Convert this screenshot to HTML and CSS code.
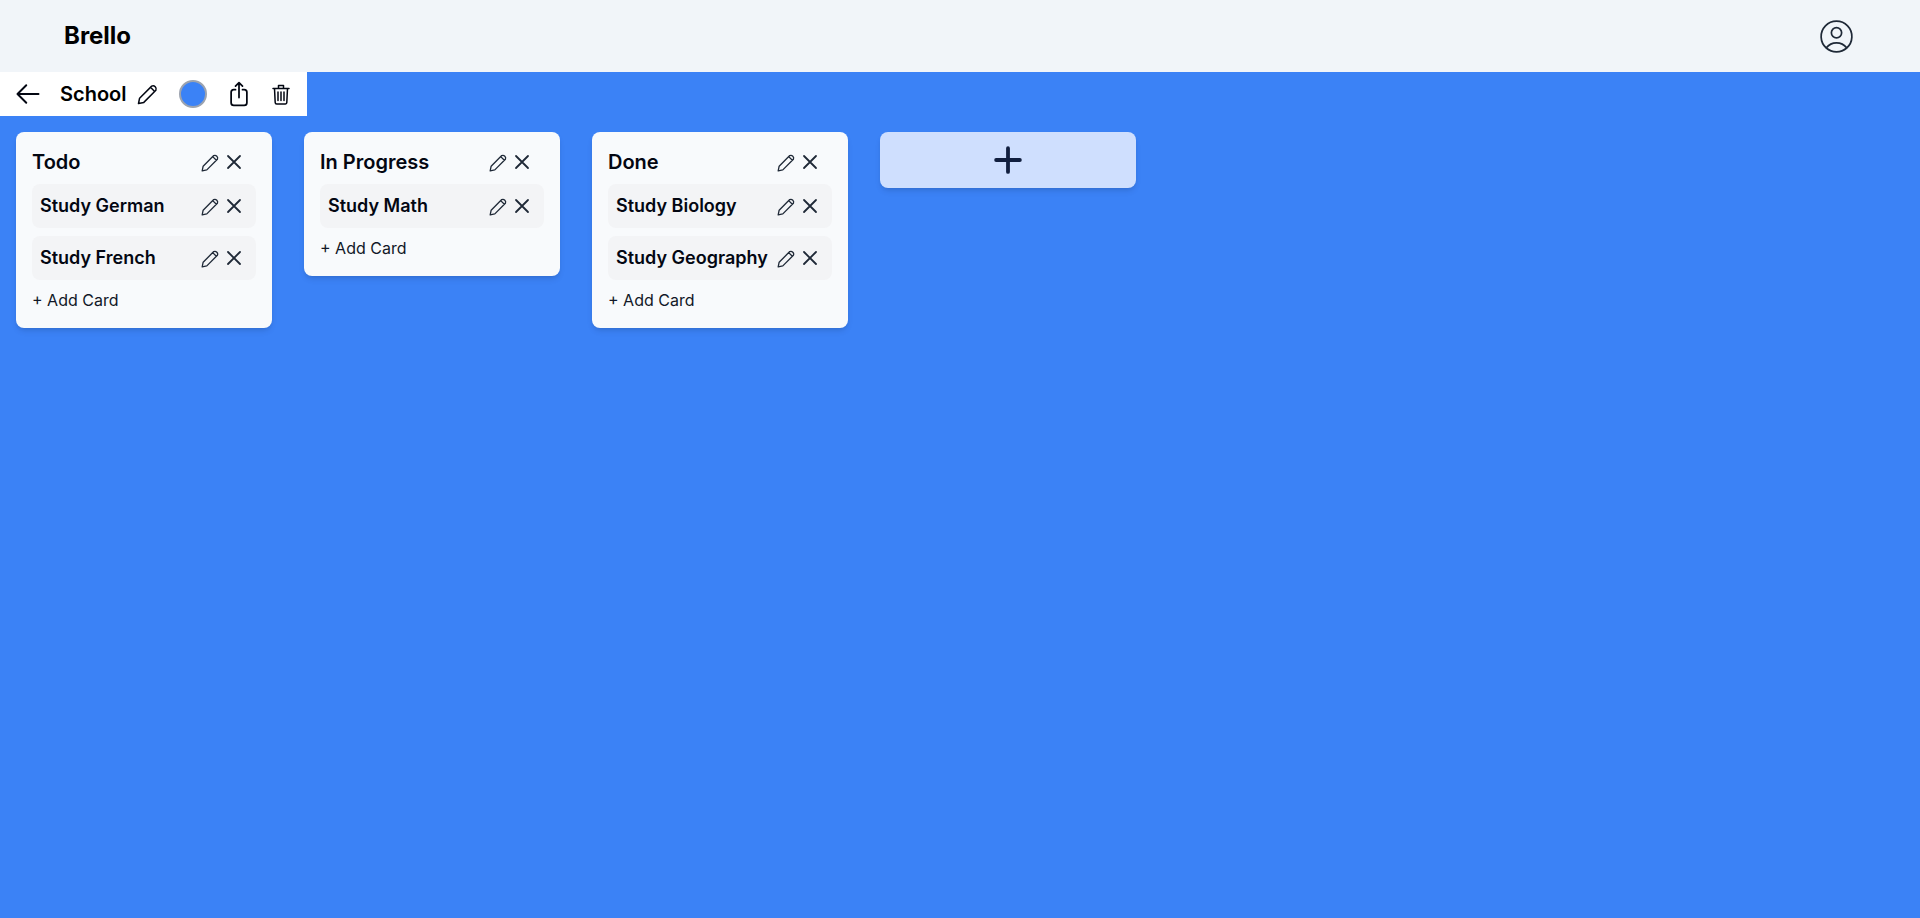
FILE: index.html
```html
<!doctype html>
<html>
  <head>
    <meta charset="utf-8" />
    <title>Brello</title>
    <link rel="stylesheet" href="styles.css">
  </head>
  <body>
    <div class="navbar">
      <div class="brand">Brello</div>
      <svg class="user-icon" viewBox="0 0 24 24"><path d="M17.982 18.725A7.488 7.488 0 0 0 12 15.75a7.488 7.488 0 0 0-5.982 2.975m11.964 0a9 9 0 1 0-11.963 0m11.963 0A8.966 8.966 0 0 1 12 21a8.966 8.966 0 0 1-5.982-2.275M15 9.75a3 3 0 1 1-6 0 3 3 0 0 1 6 0Z"/></svg>
    </div>

    <div class="toolbar">
      <svg class="back-icon" viewBox="0 0 24 24"><path d="M10.5 19.5 3 12m0 0 7.5-7.5M3 12h18"/></svg>
      <span class="board-name">School</span>
      <svg class="tool-pencil" viewBox="0 0 24 24"><path d="M3.6 16.2 15.7 4.1a3.2 3.2 0 0 1 4.2 4.2L7.8 20.4 2.5 21.5ZM14.5 5.3l4.2 4.2"/></svg>
      <span class="color-dot"></span>
      <svg class="tool-share" viewBox="0 0 24 24"><path d="M9 8.25H7.5a2.25 2.25 0 0 0-2.25 2.25v9a2.25 2.25 0 0 0 2.25 2.25h9a2.25 2.25 0 0 0 2.25-2.25v-9a2.25 2.25 0 0 0-2.25-2.25H15m0-3-3-3m0 0-3 3m3-3V15"/></svg>
      <svg class="tool-trash" viewBox="0 0 20 24"><path d="M2 6.5h16M7.5 6V3.5h5V6M3.5 6.5l.7 14a1.5 1.5 0 0 0 1.5 1.5h8.6a1.5 1.5 0 0 0 1.5-1.5l.7-14M7 10v8.5M10 10v8.5M13 10v8.5"/></svg>
    </div>

    <div class="board">
      <div class="column">
        <div class="column-header">
          <span class="column-title">Todo</span>
          <svg class="pencil" viewBox="0 0 24 24"><path d="M3.6 16.2 15.7 4.1a3.2 3.2 0 0 1 4.2 4.2L7.8 20.4 2.5 21.5ZM14.5 5.3l4.2 4.2"/></svg>
          <svg class="close" viewBox="0 0 24 24"><path d="M6 18 18 6M6 6l12 12"/></svg>
        </div>
        <div class="card">
          <span class="card-title">Study German</span>
          <svg class="pencil" viewBox="0 0 24 24"><path d="M3.6 16.2 15.7 4.1a3.2 3.2 0 0 1 4.2 4.2L7.8 20.4 2.5 21.5ZM14.5 5.3l4.2 4.2"/></svg>
          <svg class="close" viewBox="0 0 24 24"><path d="M6 18 18 6M6 6l12 12"/></svg>
        </div>
        <div class="card">
          <span class="card-title">Study French</span>
          <svg class="pencil" viewBox="0 0 24 24"><path d="M3.6 16.2 15.7 4.1a3.2 3.2 0 0 1 4.2 4.2L7.8 20.4 2.5 21.5ZM14.5 5.3l4.2 4.2"/></svg>
          <svg class="close" viewBox="0 0 24 24"><path d="M6 18 18 6M6 6l12 12"/></svg>
        </div>
        <div class="add-card">+ Add Card</div>
      </div>

      <div class="column">
        <div class="column-header">
          <span class="column-title">In Progress</span>
          <svg class="pencil" viewBox="0 0 24 24"><path d="M3.6 16.2 15.7 4.1a3.2 3.2 0 0 1 4.2 4.2L7.8 20.4 2.5 21.5ZM14.5 5.3l4.2 4.2"/></svg>
          <svg class="close" viewBox="0 0 24 24"><path d="M6 18 18 6M6 6l12 12"/></svg>
        </div>
        <div class="card">
          <span class="card-title">Study Math</span>
          <svg class="pencil" viewBox="0 0 24 24"><path d="M3.6 16.2 15.7 4.1a3.2 3.2 0 0 1 4.2 4.2L7.8 20.4 2.5 21.5ZM14.5 5.3l4.2 4.2"/></svg>
          <svg class="close" viewBox="0 0 24 24"><path d="M6 18 18 6M6 6l12 12"/></svg>
        </div>
        <div class="add-card">+ Add Card</div>
      </div>

      <div class="column">
        <div class="column-header">
          <span class="column-title">Done</span>
          <svg class="pencil" viewBox="0 0 24 24"><path d="M3.6 16.2 15.7 4.1a3.2 3.2 0 0 1 4.2 4.2L7.8 20.4 2.5 21.5ZM14.5 5.3l4.2 4.2"/></svg>
          <svg class="close" viewBox="0 0 24 24"><path d="M6 18 18 6M6 6l12 12"/></svg>
        </div>
        <div class="card">
          <span class="card-title">Study Biology</span>
          <svg class="pencil" viewBox="0 0 24 24"><path d="M3.6 16.2 15.7 4.1a3.2 3.2 0 0 1 4.2 4.2L7.8 20.4 2.5 21.5ZM14.5 5.3l4.2 4.2"/></svg>
          <svg class="close" viewBox="0 0 24 24"><path d="M6 18 18 6M6 6l12 12"/></svg>
        </div>
        <div class="card">
          <span class="card-title">Study Geography</span>
          <svg class="pencil" viewBox="0 0 24 24"><path d="M3.6 16.2 15.7 4.1a3.2 3.2 0 0 1 4.2 4.2L7.8 20.4 2.5 21.5ZM14.5 5.3l4.2 4.2"/></svg>
          <svg class="close" viewBox="0 0 24 24"><path d="M6 18 18 6M6 6l12 12"/></svg>
        </div>
        <div class="add-card">+ Add Card</div>
      </div>

      <div class="add-column">
        <svg class="plus" viewBox="0 0 24 24"><path d="M12 4.5v15m7.5-7.5h-15"/></svg>
      </div>
    </div>
  </body>
</html>
```

FILE: styles.css
```css
html,
body {
  height: 100%;
}
body {
  margin: 0;
  display: flex;
  flex-direction: column;
  align-items: flex-start;
  background: #3b82f6;
  font-family: Inter, "Liberation Sans", sans-serif;
  color: #030712;
}
svg {
  display: block;
  flex: none;
  fill: none;
  stroke: currentColor;
  stroke-width: 1.5;
  stroke-linecap: round;
  stroke-linejoin: round;
}
.navbar {
  box-sizing: border-box;
  width: 100%;
  height: 72px;
  flex: none;
  display: flex;
  justify-content: space-between;
  align-items: center;
  padding: 0 63px 0 64px;
  background: #f1f5f9;
}
.brand {
  margin-top: -2px;
  font-size: 24px;
  font-weight: 700;
  color: #000;
}
.user-icon {
  width: 41px;
  height: 41px;
  stroke-width: 1;
  color: #1f2937;
}
.toolbar {
  box-sizing: border-box;
  width: 307px;
  height: 44px;
  flex: none;
  display: flex;
  align-items: center;
  padding-left: 14px;
  background: #fff;
}
.back-icon {
  width: 28px;
  height: 28px;
  stroke-width: 1.7;
}
.board-name {
  margin-left: 18px;
  font-size: 20px;
  font-weight: 600;
  color: #000;
}
.tool-pencil {
  width: 24px;
  height: 24px;
  margin-left: 9px;
}
.color-dot {
  box-sizing: border-box;
  width: 28px;
  height: 28px;
  margin-left: 19px;
  border: 2px solid #9ca3af;
  border-radius: 50%;
  background: #3b82f6;
}
.tool-share {
  width: 28px;
  height: 28px;
  margin-left: 18px;
}
.tool-trash {
  width: 20px;
  height: 24px;
  margin-left: 18px;
}
.board {
  display: flex;
  align-items: flex-start;
  gap: 32px;
  padding: 16px;
}
.column {
  box-sizing: border-box;
  width: 256px;
  padding: 16px;
  border-radius: 8px;
  background: #f8fafc;
  box-shadow: 0 4px 6px -1px rgba(0, 0, 0, 0.1), 0 2px 4px -2px rgba(0, 0, 0, 0.1);
}
.column-header,
.card {
  display: flex;
  align-items: center;
  gap: 1px;
}
.column-header {
  height: 28px;
  margin-bottom: 8px;
}
.column-title {
  flex: 1;
  font-size: 20px;
  font-weight: 600;
}
.card {
  height: 44px;
  margin-bottom: 8px;
  padding-left: 8px;
  border-radius: 8px;
  background: #f3f4f6;
}
.card-title {
  flex: 1;
  margin-top: -1px;
  font-size: 18px;
  font-weight: 600;
  white-space: nowrap;
}
.pencil {
  width: 21px;
  height: 21px;
  color: #1f2937;
}
.close {
  width: 24px;
  height: 24px;
  margin-right: 10px;
  stroke-width: 1.8;
  color: #1f2937;
}
.add-card {
  font-size: 16px;
  line-height: 24px;
  color: #111827;
}
.add-column {
  width: 256px;
  height: 56px;
  display: flex;
  align-items: center;
  justify-content: center;
  border-radius: 8px;
  background: #cfdffe;
  box-shadow: 0 4px 6px -1px rgba(0, 0, 0, 0.1), 0 2px 4px -2px rgba(0, 0, 0, 0.1);
}
.plus {
  width: 38px;
  height: 38px;
  stroke-width: 2.4;
  color: #111f3f;
}
```
